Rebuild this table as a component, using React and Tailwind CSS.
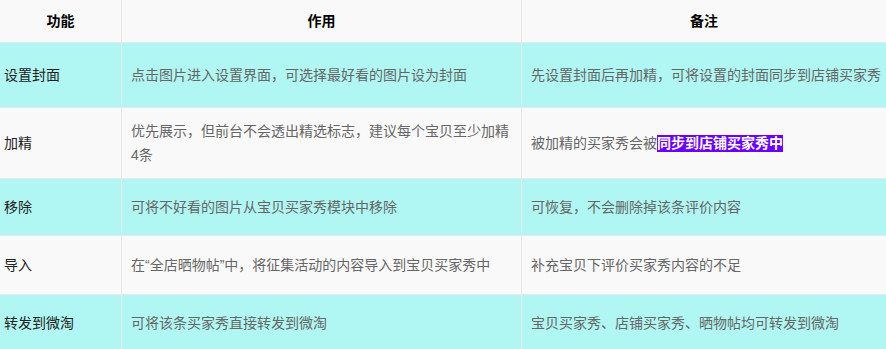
const rows = [
  {
    name: '设置封面',
    use: '点击图片进入设置界面，可选择最好看的图片设为封面',
    note: '先设置封面后再加精，可将设置的封面同步到店铺买家秀',
    h: 'h-[65px]',
    bg: 'bg-[#b0f6f2]',
  },
  {
    name: '加精',
    use: '优先展示，但前台不会透出精选标志，建议每个宝贝至少加精4条',
    note: (
      <>
        被加精的买家秀会被
        <span className="inline-block bg-[#6a00ff] font-bold leading-[17px] text-white">同步到店铺买家秀中</span>
      </>
    ),
    h: 'h-[71px]',
    bg: 'bg-[#f9f9f9]',
  },
  {
    name: '移除',
    use: '可将不好看的图片从宝贝买家秀模块中移除',
    note: '可恢复，不会删除掉该条评价内容',
    h: 'h-[57px]',
    bg: 'bg-[#b0f6f2]',
  },
  {
    name: '导入',
    use: '在“全店晒物帖”中，将征集活动的内容导入到宝贝买家秀中',
    note: '补充宝贝下评价买家秀内容的不足',
    h: 'h-[59px]',
    bg: 'bg-[#f9f9f9]',
  },
  {
    name: '转发到微淘',
    use: '可将该条买家秀直接转发到微淘',
    note: '宝贝买家秀、店铺买家秀、晒物帖均可转发到微淘',
    h: 'h-[56px]',
    bg: 'bg-[#b0f6f2]',
  },
];

const App = () => {
  return (
    <div className="h-[349px] w-[886px] overflow-hidden bg-white font-['Liberation_Sans','Noto_Sans_CJK_SC',sans-serif] text-[14px] leading-6">
      {/* header */}
      <div className="grid h-[43px] grid-cols-[122px_400px_1fr] border-b border-[#e8e8e8] bg-[#f9f9f9] font-bold text-black">
        <div className="flex items-center justify-center border-r border-[#e8e8e8]">功能</div>
        <div className="flex items-center justify-center border-r border-[#e8e8e8]">作用</div>
        <div className="flex items-center justify-center">备注</div>
      </div>

      {rows.map((r) => (
        <div
          key={r.name}
          className={`grid grid-cols-[122px_400px_1fr] border-b border-[#e8e8e8] ${r.h} ${r.bg}`}
        >
          <div className="flex items-center border-r border-[#e8e8e8] pl-1 text-[#222]">{r.name}</div>
          <div className="flex items-center border-r border-[#e8e8e8] px-[9px] text-[#666]">
            <p>{r.use}</p>
          </div>
          <div className="flex items-center pl-[9px] pr-1 text-[#666]">
            <p>{r.note}</p>
          </div>
        </div>
      ))}
    </div>
  );
};

export default App;
